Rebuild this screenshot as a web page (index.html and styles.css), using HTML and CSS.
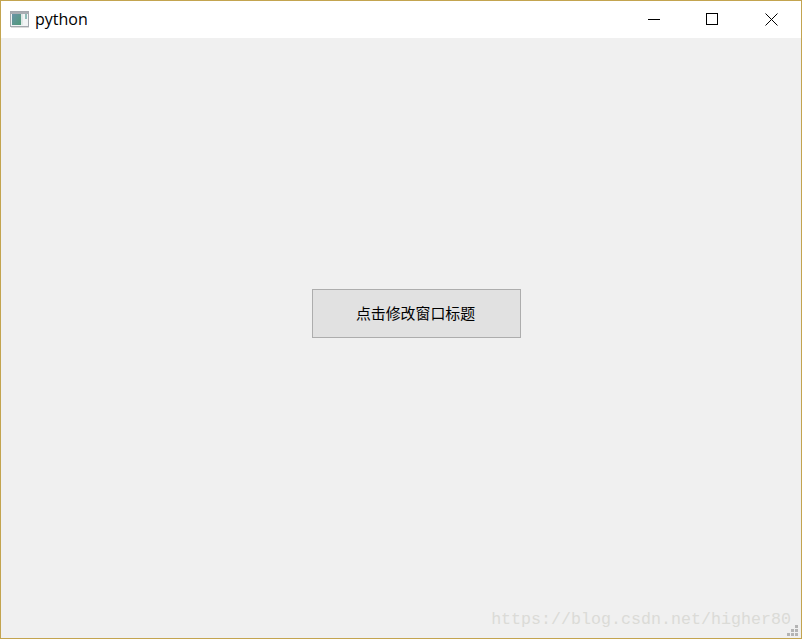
FILE: index.html
```html
<!DOCTYPE html>
<html lang="zh">
<head>
<meta charset="utf-8">
<title>python</title>
<link rel="stylesheet" href="styles.css">
</head>
<body>
<div class="window">
  <header class="titlebar">
    <svg class="app-icon" width="20" height="17" viewBox="0 0 20 17">
      <defs>
        <linearGradient id="pane" x1="0" y1="0" x2="1" y2="1">
          <stop offset="0" stop-color="#6a93a8"/>
          <stop offset="1" stop-color="#4f9a78"/>
        </linearGradient>
      </defs>
      <rect x="0.5" y="0.5" width="18" height="15" fill="#f2f4f5" stroke="#a4a8ae"/>
      <rect x="1" y="1" width="17" height="2" fill="#a9adb3"/>
      <rect x="2" y="3" width="9" height="11" fill="url(#pane)"/>
      <rect x="11" y="3" width="2" height="11" fill="#dfe8e6"/>
      <rect x="15" y="3" width="2" height="5" fill="#8fbcb8"/>
      <rect x="1" y="16" width="18" height="1" fill="#dcdcdc"/>
    </svg>
    <span class="title">python</span>
    <div class="controls">
      <button class="ctl" aria-label="最小化">
        <svg width="13" height="13" viewBox="0 0 13 13"><path d="M0 6.5H12" stroke="#000" fill="none"/></svg>
      </button>
      <button class="ctl" aria-label="最大化">
        <svg width="13" height="13" viewBox="0 0 13 13"><rect x="0.5" y="0.5" width="11" height="11" stroke="#000" fill="none"/></svg>
      </button>
      <button class="ctl ctl-close" aria-label="关闭">
        <svg width="13" height="13" viewBox="0 0 13 13"><path d="M0.5 0.5L12.5 12.5M12.5 0.5L0.5 12.5" stroke="#000" fill="none"/></svg>
      </button>
    </div>
  </header>
  <main class="content">
    <button class="action">点击修改窗口标题</button>
  </main>
  <div class="watermark">https://blog.csdn.net/higher80</div>
  <svg class="grip" width="11" height="11" viewBox="0 0 11 11" fill="#b4b4b4">
    <rect x="8" y="0" width="3" height="3"/>
    <rect x="4" y="4" width="3" height="3"/>
    <rect x="8" y="4" width="3" height="3"/>
    <rect x="0" y="8" width="3" height="3"/>
    <rect x="4" y="8" width="3" height="3"/>
    <rect x="8" y="8" width="3" height="3"/>
  </svg>
</div>
</body>
</html>
```
FILE: styles.css
```css
html, body {
  margin: 0;
  padding: 0;
  width: 802px;
  height: 639px;
  overflow: hidden;
}

.window {
  position: relative;
  box-sizing: border-box;
  width: 802px;
  height: 639px;
  border: 1px solid #c3a44f;
  background: #f0f0f0;
  display: flex;
  flex-direction: column;
}

.titlebar {
  height: 37px;
  flex: none;
  background: #fff;
  display: flex;
  align-items: center;
  padding-left: 9px;
}

.app-icon {
  flex: none;
  margin-right: 5px;
}

.title {
  font: 16px "Open Sans", "Liberation Sans", sans-serif;
  color: #000;
  line-height: 20px;
  padding-bottom: 2px;
}

.controls {
  margin-left: auto;
  display: flex;
  padding-right: 1px;
}

.ctl {
  width: 58px;
  height: 37px;
  padding: 0;
  border: 0;
  background: none;
  display: flex;
  align-items: center;
  justify-content: center;
}

.ctl-close {
  margin-left: 1px;
}

.content {
  flex: 1;
  padding: 251px 0 0 311px;
}

.action {
  display: flex;
  align-items: center;
  justify-content: center;
  box-sizing: border-box;
  width: 209px;
  height: 49px;
  padding: 0 2px 2px 0;
  border: 1px solid #adadad;
  background: #e1e1e1;
  color: #000;
  font: 14.9px "Noto Sans CJK SC", sans-serif;
}

.watermark {
  position: absolute;
  right: 10px;
  bottom: 8px;
  font: 16.67px/20px "Liberation Mono", monospace;
  color: #dbdbd7;
  white-space: nowrap;
}

.grip {
  position: absolute;
  right: 3px;
  bottom: 2px;
}
```
